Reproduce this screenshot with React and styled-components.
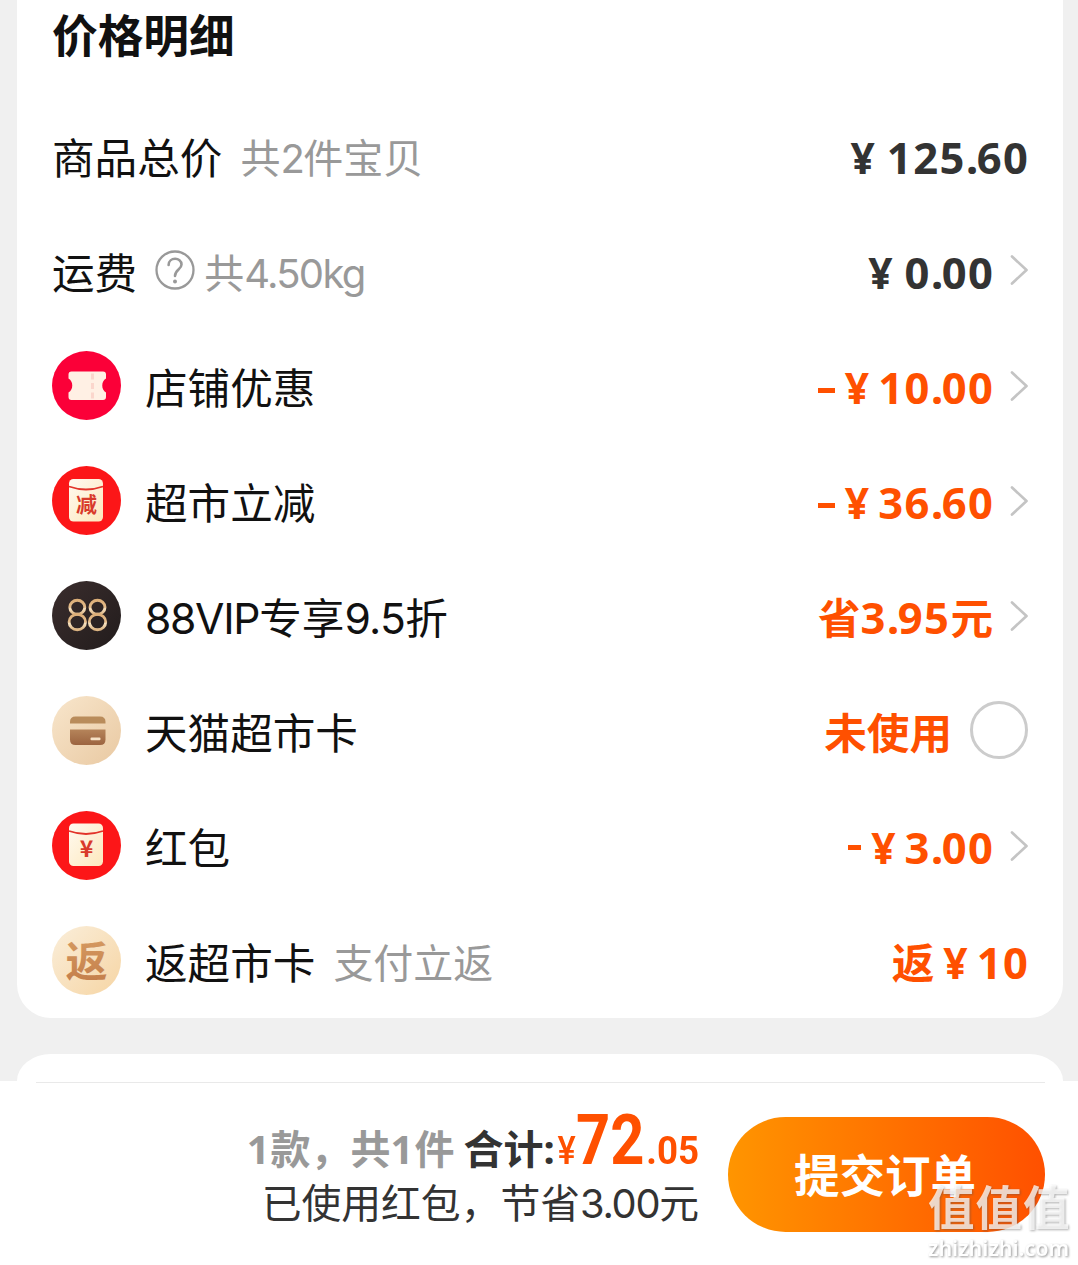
import React from "react";
import styled, { createGlobalStyle } from "styled-components";

const GlobalStyle = createGlobalStyle`
  * { box-sizing: border-box; }
  html, body { margin: 0; padding: 0; }
  body {
    background: #f0f0f0;
    font-family: Inter, "Noto Sans CJK SC", sans-serif;
    color: #111;
    overflow: hidden;
  }
`;

const Page = styled.div`
  position: relative;
  width: 1078px;
  height: 1265px;
  display: flex;
  flex-direction: column;
  overflow: hidden;
`;

const PriceCard = styled.section`
  margin: 0 15px 0 17px;
  height: 1018px;
  padding: 0 35px;
  background: #fff;
  border-radius: 0 0 34px 34px;
`;

const Title = styled.h2`
  margin: 0;
  height: 98px;
  padding-top: 9px;
  font-size: 45.7px;
  line-height: 56px;
  font-weight: 700;
`;

const Row = styled.div`
  height: 115px;
  display: flex;
  align-items: center;
`;

const Badge = styled.svg`
  flex: none;
  width: 69px;
  height: 69px;
  margin-right: 24px;
  display: block;
`;

const Label = styled.span`
  padding-top: 6px;
  font-size: 42.6px;
  line-height: 56px;
  white-space: nowrap;
`;

const Hint = styled.span`
  padding-top: 6px;
  margin-left: ${(p) => p.$gap}px;
  font-size: 40px;
  line-height: 56px;
  color: #999;
  white-space: nowrap;
`;

const Digits = styled.span`
  letter-spacing: ${(p) => p.$tracking}px;
`;

const HelpIcon = styled.svg`
  flex: none;
  display: block;
  width: 40px;
  height: 40px;
  margin: -1px 0 0 18px;
`;

const Amount = styled.span`
  display: flex;
  align-items: baseline;
  margin-left: auto;
  padding-top: 3px;
  font-family: "Noto Sans", "Noto Sans CJK SC", sans-serif;
  font-size: 42.6px;
  line-height: 56px;
  font-weight: 700;
  white-space: nowrap;
  color: ${(p) => (p.$plain ? "#333" : "#ff5000")};
`;

const Figure = styled.span`
  font-size: 43.5px;
  letter-spacing: 1.5px;
  margin-right: ${(p) => p.$end ?? -1.5}px;
`;

const Dot = styled.span`
  letter-spacing: -1.5px;
`;

const Minus = styled.i`
  width: ${(p) => p.$width}px;
  height: 5px;
  margin-right: ${(p) => p.$gap}px;
  align-self: center;
  margin-top: ${(p) => p.$drop}px;
  background: currentColor;
`;

const Yen = styled.span`
  margin-right: ${(p) => p.$gap}px;
`;

const Chevron = styled.svg`
  flex: none;
  display: block;
  width: 18px;
  height: 30px;
  margin: ${(p) => p.$lift || 0}px 0 0 17px;
`;

const Radio = styled.span`
  flex: none;
  width: 58px;
  height: 58px;
  margin: -1px 0 0 18px;
  border: 3px solid #ccc;
  border-radius: 50%;
`;

const NextCard = styled.section`
  margin: 36px 15px 0 17px;
  height: 27px;
  background: #fff;
  border-radius: 34px 34px 0 0 / 27px 27px 0 0;
`;

const Footer = styled.footer`
  flex: 1;
  padding: 36px 33px 0 36px;
  background: #fff;
  display: flex;
  justify-content: flex-end;
  align-items: flex-start;
  background-image: linear-gradient(#e9e9e9, #e9e9e9);
  background-repeat: no-repeat;
  background-size: 1009px 1px;
  background-position: 36px 1px;
`;

const Summary = styled.div`
  display: flex;
  flex-direction: column;
  align-items: flex-end;
  margin-right: 29px;
`;

const TotalLine = styled.div`
  display: flex;
  align-items: baseline;
  height: 58px;
  line-height: 58px;
  font-family: "Noto Sans", "Noto Sans CJK SC", sans-serif;
  font-size: 40px;
  font-weight: 700;
  color: #333;
  white-space: nowrap;
  margin-top: -6px;
`;

const Count = styled.span`
  color: #999;
  margin-right: 9px;
`;

const Price = styled.span`
  display: inline-block;
  font-family: Roboto, sans-serif;
  font-weight: ${(p) => p.$weight || 700};
  font-size: ${(p) => p.$size}px;
  line-height: 58px;
  color: #ff5000;
  transform: scaleX(${(p) => p.$squeeze || 1});
  transform-origin: right;
  margin-left: ${(p) => p.$shift || 0}px;
`;

const SavedLine = styled.div`
  height: 56px;
  margin-top: 7px;
  line-height: 56px;
  font-size: 39.8px;
  color: #333;
  white-space: nowrap;
`;

const SubmitButton = styled.button`
  width: 317px;
  height: 115px;
  padding: 5px 3px 0 0;
  border: 0;
  border-radius: 58px;
  background: linear-gradient(90deg, #ff9500, #ff5000);
  color: #fff;
  font: 700 45.5px/60px Inter, "Noto Sans CJK SC", sans-serif;
`;

const Watermark = styled.div`
  position: absolute;
  right: 7px;
  bottom: 3px;
  width: 143px;
  filter: drop-shadow(1.5px 1.5px 0.8px rgba(80, 80, 80, 0.6));
  white-space: nowrap;
`;

const MarkName = styled.div`
  font: 700 46.5px/46px "Noto Sans CJK SC", sans-serif;
  letter-spacing: 1px;
  height: 52px;
  color: rgba(255, 255, 255, 0.75);
`;

const MarkSite = styled.div`
  font: 600 21.5px/28px "Noto Sans", sans-serif;
  color: #fff;
`;

const BadgeGlyph = styled.text`
  font-family: "Noto Sans CJK SC", sans-serif;
  font-size: ${(p) => p.$size}px;
  font-weight: 700;
  text-anchor: middle;
`;

const Arrow = ({ lift }) => (
  <Chevron viewBox="0 0 18 30" fill="none" $lift={lift}>
    <path d="M2 1.500 L16.500 15 L2 28.500" stroke="#c4c4c4" strokeWidth="2.700" strokeLinecap="round" strokeLinejoin="round" />
  </Chevron>
);

const Money = ({ value, end }) => {
  const [whole, cents] = value.split(".");
  return (
    <Figure $end={end}>
      {whole}
      {cents && <Dot>.</Dot>}
      {cents}
    </Figure>
  );
};

const CouponBadge = () => (
  <Badge viewBox="0 0 69 69">
    <circle cx="34.5" cy="34.5" r="34.5" fill="#fb0038" />
    <path d="M19.500 20.500 H51 Q54 20.500 54 23.500 V27.500 C49 30 49 39 54 41.500 V46 Q54 49 51 49 H19.500 Q16.500 49 16.500 46 V41.500 C21.500 39 21.500 30 16.500 27.500 V23.500 Q16.500 20.500 19.500 20.500Z" fill="#fff0e4" />
    <path d="M40.500 22.500 V48" stroke="#fbd6cc" strokeWidth="3" strokeDasharray="6 3.500" />
  </Badge>
);

const PacketBadge = ({ id, glyph, size, y, glyphY }) => (
  <Badge viewBox="0 0 69 69">
    <defs>
      <linearGradient id={id} x1="0" y1="0" x2="1" y2="1">
        <stop offset="0" stopColor="#fffaf0" />
        <stop offset="1" stopColor="#fde8bd" />
      </linearGradient>
    </defs>
    <circle cx="34.5" cy="34.5" r="34.5" fill="#fc1618" />
    <g transform={`translate(0 ${y})`}>
      <rect x="17" y="12.500" width="34" height="42.500" rx="4.500" fill={`url(#${id})`} />
      <path d="M17 20 Q34 26 51 20" fill="none" stroke="#e2342a" strokeWidth="1.8" />
    </g>
    <BadgeGlyph x="34.5" y={glyphY} $size={size} fill="#d93a2b">{glyph}</BadgeGlyph>
  </Badge>
);

const VipBadge = () => (
  <Badge viewBox="0 0 69 69">
    <defs>
      <linearGradient id="gold" x1="0" y1="0" x2="0" y2="1">
        <stop offset="0" stopColor="#dcae78" />
        <stop offset="0.5" stopColor="#e3bb8a" />
        <stop offset="0.6" stopColor="#f7e2c0" />
        <stop offset="1" stopColor="#dcb482" />
      </linearGradient>
      <linearGradient id="night" x1="0" y1="0" x2="1" y2="1">
        <stop offset="0" stopColor="#3a2d2d" />
        <stop offset="1" stopColor="#221c1c" />
      </linearGradient>
    </defs>
    <circle cx="34.5" cy="34.5" r="34.5" fill="url(#night)" />
    <g fill="none" stroke="url(#gold)" strokeWidth="2.9">
      <ellipse cx="25.300" cy="26.300" rx="7.500" ry="7" />
      <ellipse cx="25.300" cy="41" rx="8.200" ry="7.700" />
      <ellipse cx="45.500" cy="26.300" rx="7.500" ry="7" />
      <ellipse cx="45.500" cy="41" rx="8.200" ry="7.700" />
    </g>
  </Badge>
);

const CardBadge = () => (
  <Badge viewBox="0 0 69 69">
    <defs>
      <linearGradient id="sand" x1="0" y1="0" x2="1" y2="1">
        <stop offset="0" stopColor="#f8e6cc" />
        <stop offset="1" stopColor="#e9c9a2" />
      </linearGradient>
      <linearGradient id="bronze" x1="0" y1="0" x2="0" y2="1">
        <stop offset="0" stopColor="#b5845a" />
        <stop offset="1" stopColor="#9c6440" />
      </linearGradient>
    </defs>
    <circle cx="34.5" cy="34.5" r="34.5" fill="url(#sand)" />
    <path d="M18 27.500 V26 Q18 20.500 23.500 20.500 H48 Q53.500 20.500 53.500 26 V27.500Z" fill="#b98c5b" />
    <path d="M18 33.500 H53.500 V43.500 Q53.500 49 48 49 H23.500 Q18 49 18 43.500Z" fill="url(#bronze)" />
    <rect x="38.500" y="41.500" width="10" height="2.700" rx="1" fill="#f6e2c6" />
  </Badge>
);

const RebateBadge = () => (
  <Badge viewBox="0 0 69 69">
    <defs>
      <linearGradient id="cream" x1="0" y1="0" x2="1" y2="1">
        <stop offset="0" stopColor="#faeeda" />
        <stop offset="1" stopColor="#f6d5a4" />
      </linearGradient>
      <linearGradient id="copper" x1="0" y1="0" x2="0" y2="1">
        <stop offset="0" stopColor="#d9a066" />
        <stop offset="1" stopColor="#c27b48" />
      </linearGradient>
    </defs>
    <circle cx="34.5" cy="34.5" r="34.5" fill="url(#cream)" />
    <BadgeGlyph x="34.5" y="50.500" $size={42} fill="url(#copper)">返</BadgeGlyph>
  </Badge>
);

export default function App() {
  return (
    <Page lang="zh-CN">
      <GlobalStyle />
      <PriceCard>
        <Title>价格明细</Title>
        <Row>
          <Label>商品总价</Label>
          <Hint $gap={18}>共<Digits $tracking={-1.5}>2</Digits>件宝贝</Hint>
          <Amount $plain><Yen $gap={12}>¥</Yen><Money value="125.60" /></Amount>
        </Row>
        <Row>
          <Label>运费</Label>
          <HelpIcon viewBox="0 0 40 40" fill="none">
            <circle cx="20" cy="20" r="18.500" stroke="#999" strokeWidth="2.300" />
            <path d="M13.600 15 C13.600 6.800 26.500 6.800 26.500 14.500 C26.500 19.500 20 19.800 20 26" stroke="#999" strokeWidth="2.600" strokeLinecap="round" />
            <circle cx="20" cy="31.500" r="2" fill="#999" />
          </HelpIcon>
          <Hint $gap={9}>共<Digits $tracking={-1.7}>4.50kg</Digits></Hint>
          <Amount $plain><Yen $gap={12}>¥</Yen><Money value="0.00" /></Amount>
          <Arrow lift={-2} />
        </Row>
        <Row>
          <CouponBadge />
          <Label>店铺优惠</Label>
          <Amount><Minus $width={17} $gap={10} $drop={7} /><Yen $gap={9}>¥</Yen><Money value="10.00" /></Amount>
          <Arrow />
        </Row>
        <Row>
          <PacketBadge id="packetA" glyph="减" size={21} y={0.5} glyphY={46} />
          <Label>超市立减</Label>
          <Amount><Minus $width={17} $gap={10} $drop={7} /><Yen $gap={9}>¥</Yen><Money value="36.60" /></Amount>
          <Arrow />
        </Row>
        <Row>
          <VipBadge />
          <Label><Digits $tracking={-1.3}>88VIP</Digits>专享<Digits $tracking={-0.7}>9.5</Digits>折</Label>
          <Amount>省<Money value="3.95" end={0} />元</Amount>
          <Arrow />
        </Row>
        <Row>
          <CardBadge />
          <Label>天猫超市卡</Label>
          <Amount>未使用</Amount>
          <Radio />
        </Row>
        <Row>
          <PacketBadge id="packetB" glyph="¥" size={23} y={0} glyphY={46} />
          <Label>红包</Label>
          <Amount><Minus $width={13} $gap={10} $drop={1} /><Yen $gap={9}>¥</Yen><Money value="3.00" /></Amount>
          <Arrow />
        </Row>
        <Row>
          <RebateBadge />
          <Label>返超市卡</Label>
          <Hint $gap={18}>支付立返</Hint>
          <Amount><Yen $gap={9}>返</Yen><Yen $gap={9}>¥</Yen><Money value="10" /></Amount>
        </Row>
      </PriceCard>
      <NextCard />
      <Footer>
        <Summary>
          <TotalLine>
            <Count><Digits $tracking={1}>1</Digits>款，共<Digits $tracking={1}>1</Digits>件</Count>
            <span>合计:</span>
            <Price $size={39} $weight={500} $squeeze={0.88}>¥</Price>
            <Price $size={71} $squeeze={0.84} $shift={-12}>72</Price>
            <Price $size={39} $squeeze={0.94} $shift={-2}>.05</Price>
          </TotalLine>
          <SavedLine>已使用红包，节省<Digits $tracking={-1.3}>3.00</Digits>元</SavedLine>
        </Summary>
        <SubmitButton>提交订单</SubmitButton>
      </Footer>
      <Watermark>
        <MarkName>值值值</MarkName>
        <MarkSite>zhizhizhi.com</MarkSite>
      </Watermark>
    </Page>
  );
}
